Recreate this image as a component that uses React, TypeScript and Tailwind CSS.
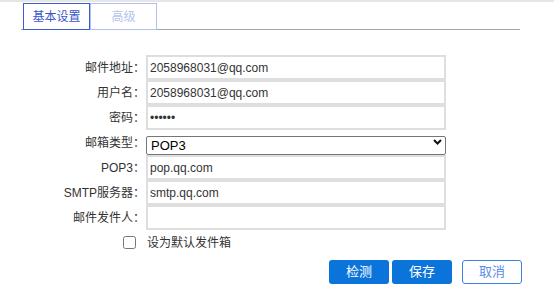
import { useState } from "react";

const font = { fontFamily: '"Liberation Sans", "Noto Sans CJK SC", sans-serif' };

function Field({ label, value, type = "text" }: { label: string; value: string; type?: string }) {
  return (
    <div className="flex items-center h-[25px]">
      <label className="w-[146px] pr-[1px] text-right text-[12px] text-[#333]">{label}</label>
      <input
        type={type}
        defaultValue={value}
        className="w-[300px] h-[25px] border-2 border-[#dedede] px-[2px] text-[12px] text-[#333] outline-none"
      />
    </div>
  );
}

export default function App() {
  const [tab, setTab] = useState(0);

  return (
    <div className="w-[554px] h-[306px] bg-white" style={font}>
      <div className="h-[2px] bg-[#e6e6e6]" />

      {/* tabs */}
      <div className="ml-[21px] w-[499px] h-[28px] flex items-end pl-[2px] border-b border-[#9ea7b0]">
        <button
          onClick={() => setTab(0)}
          className={`w-[67px] h-[27px] -mb-px border text-[12px] ${tab === 0 ? "border-[#3b5fcf] text-[#3a56c8]" : "border-[#aebff0] text-[#b3c2ee]"}`}
        >
          基本设置
        </button>
        <button
          onClick={() => setTab(1)}
          className={`w-[67px] h-[27px] -mb-px border text-[12px] ${tab === 1 ? "border-[#3b5fcf] text-[#3a56c8]" : "border-[#aebff0] text-[#b3c2ee]"}`}
        >
          高级
        </button>
      </div>

      {/* form */}
      <div className="mt-[25px] flex flex-col">
        <Field label="邮件地址：" value="2058968031@qq.com" />
        <Field label="用户名：" value="2058968031@qq.com" />
        <Field label="密码：" value="123456" type="password" />
        <div className="flex items-center h-[19px] my-[3px]">
          <label className="w-[146px] pr-[1px] text-right text-[12px] text-[#333]">邮箱类型：</label>
          <div className="relative w-[300px] h-[19px]">
            <select className="w-full h-full appearance-none border border-[#767676] rounded-[2px] pl-[4px] text-[13px] leading-[17px] text-black outline-none">
              <option>POP3</option>
              <option>IMAP</option>
            </select>
            <svg
              className="absolute right-[4px] top-[6px] pointer-events-none"
              width="9"
              height="6"
              viewBox="0 0 9 6"
            >
              <path d="M1 1 L4.5 4.5 L8 1" fill="none" stroke="#111" strokeWidth="2" />
            </svg>
          </div>
        </div>
        <Field label="POP3：" value="pop.qq.com" />
        <Field label="SMTP服务器：" value="smtp.qq.com" />
        <Field label="邮件发件人：" value="" />

        <div className="flex items-center h-[25px] pl-[119px]">
          <input type="checkbox" className="w-[13px] h-[13px] m-[3px_3px_3px_4px]" />
          <span className="ml-[8px] text-[12px] text-[#333]">设为默认发件箱</span>
        </div>
      </div>

      {/* buttons */}
      <div className="mt-[5px] flex pl-[329px]">
        <button className="w-[60px] h-[24px] rounded-[3px] bg-[#0b74da] text-white text-[13px]">检测</button>
        <button className="ml-[3px] w-[60px] h-[24px] rounded-[3px] bg-[#0b74da] text-white text-[13px]">保存</button>
        <button className="ml-[10px] w-[60px] h-[24px] rounded-[3px] border border-[#3f7fdb] bg-white text-[#5a8be6] text-[13px]">
          取消
        </button>
      </div>
    </div>
  );
}
